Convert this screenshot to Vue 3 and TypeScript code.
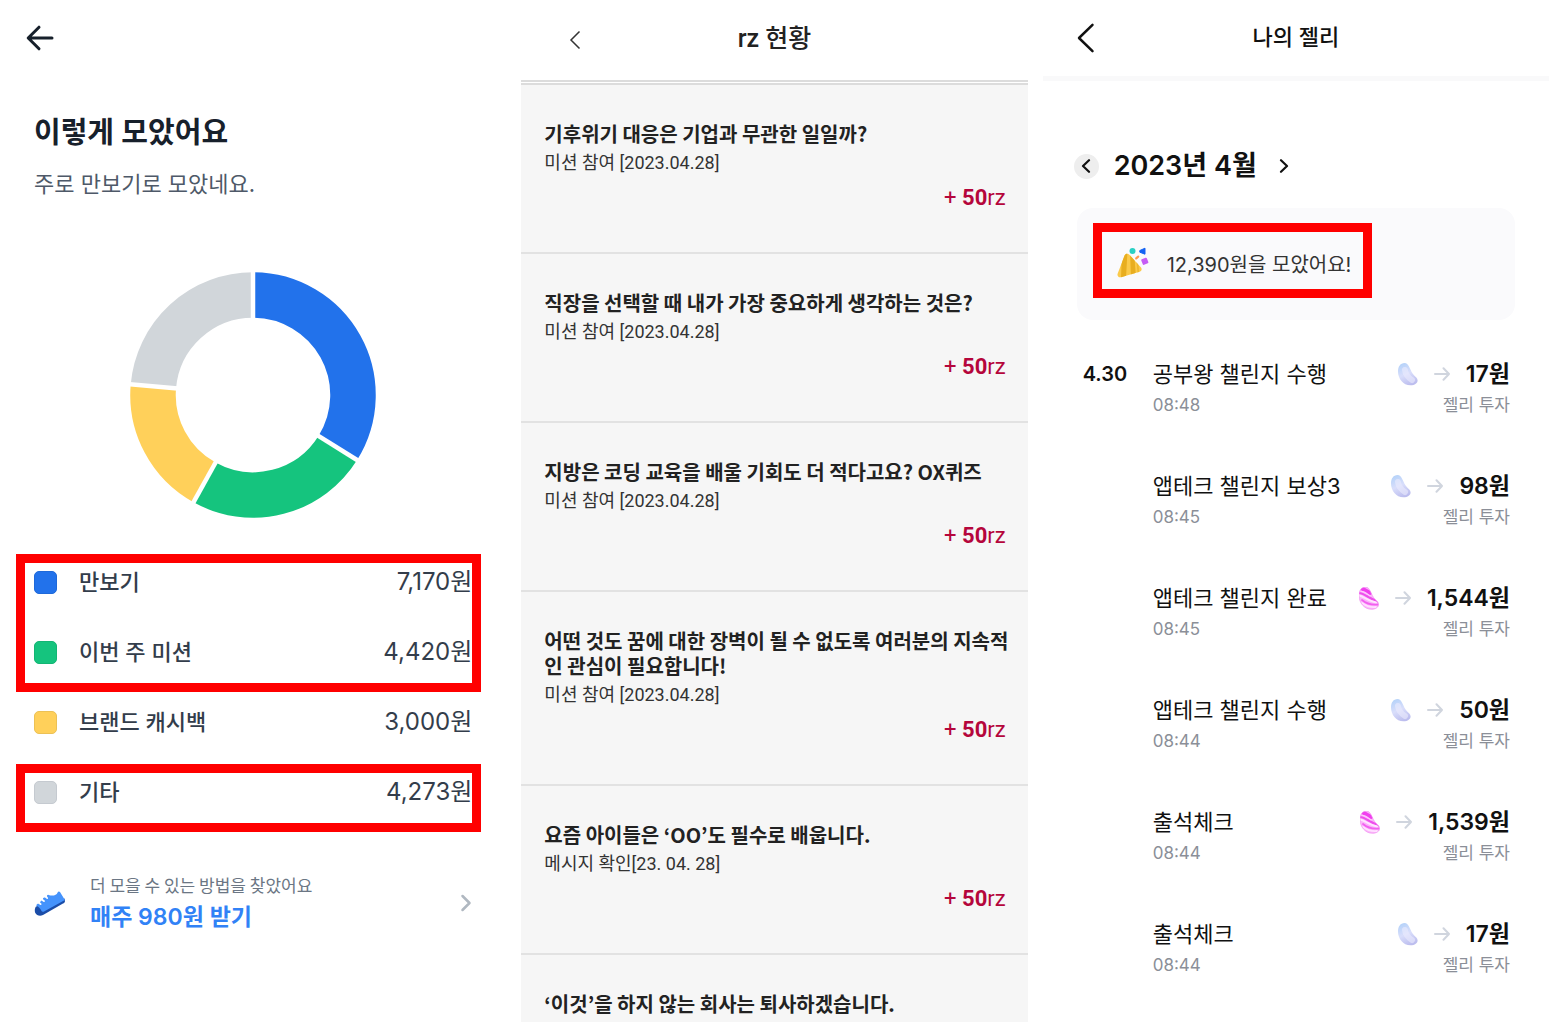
<script setup lang="ts">
interface Share {
  label: string
  amount: string
  color: string
  edge: string
}

interface ShareGroup {
  marked: boolean
  shares: Share[]
}

interface Slice {
  color: string
  from: number
  to: number
}

interface Mission {
  title: string
  note: string
  points?: number
}

interface JellyEntry {
  date: string
  name: string
  time: string
  kind: 'blue' | 'pink'
  amount: string
}

const shareGroups: ShareGroup[] = [
  {
    marked: true,
    shares: [
      { label: '만보기', amount: '7,170원', color: '#2272eb', edge: '#1f69d9' },
      { label: '이번 주 미션', amount: '4,420원', color: '#15c47e', edge: '#13b574' },
    ],
  },
  {
    marked: false,
    shares: [{ label: '브랜드 캐시백', amount: '3,000원', color: '#ffd05a', edge: '#ecc155' }],
  },
  {
    marked: true,
    shares: [{ label: '기타', amount: '4,273원', color: '#d1d6da', edge: '#c5cad0' }],
  },
]

const slices: Slice[] = [
  { color: '#2272eb', from: 0, to: 122 },
  { color: '#15c47e', from: 122, to: 209 },
  { color: '#ffd05a', from: 209, to: 275 },
  { color: '#d1d6da', from: 275, to: 360 },
]

const CENTER = 123
const RING = 100

function point(angle: number, radius: number): string {
  const rad = ((angle - 90) * Math.PI) / 180
  const x = CENTER + radius * Math.cos(rad)
  const y = CENTER + radius * Math.sin(rad)
  return `${x.toFixed(2)} ${y.toFixed(2)}`
}

function arc(slice: Slice): string {
  const large = slice.to - slice.from > 180 ? 1 : 0
  return `M${point(slice.from, RING)} A${RING} ${RING} 0 ${large} 1 ${point(slice.to, RING)}`
}

function divider(angle: number): string {
  return `M${point(angle, 70)} L${point(angle, 126)}`
}

const missions: Mission[] = [
  { title: '기후위기 대응은 기업과 무관한 일일까?', note: '미션 참여 [2023.04.28]', points: 50 },
  { title: '직장을 선택할 때 내가 가장 중요하게 생각하는 것은?', note: '미션 참여 [2023.04.28]', points: 50 },
  { title: '지방은 코딩 교육을 배울 기회도 더 적다고요? OX퀴즈', note: '미션 참여 [2023.04.28]', points: 50 },
  {
    title: '어떤 것도 꿈에 대한 장벽이 될 수 없도록 여러분의 지속적인 관심이 필요합니다!',
    note: '미션 참여 [2023.04.28]',
    points: 50,
  },
  { title: '요즘 아이들은 ‘OO’도 필수로 배웁니다.', note: '메시지 확인[23. 04. 28]', points: 50 },
  { title: '‘이것’을 하지 않는 회사는 퇴사하겠습니다.', note: '' },
]

const entries: JellyEntry[] = [
  { date: '4.30', name: '공부왕 챌린지 수행', time: '08:48', kind: 'blue', amount: '17원' },
  { date: '', name: '앱테크 챌린지 보상3', time: '08:45', kind: 'blue', amount: '98원' },
  { date: '', name: '앱테크 챌린지 완료', time: '08:45', kind: 'pink', amount: '1,544원' },
  { date: '', name: '앱테크 챌린지 수행', time: '08:44', kind: 'blue', amount: '50원' },
  { date: '', name: '출석체크', time: '08:44', kind: 'pink', amount: '1,539원' },
  { date: '', name: '출석체크', time: '08:44', kind: 'blue', amount: '17원' },
]

const jellyShape =
  'M6.500 0C2.500 0 0 3.500 0 8.500C0 15.500 5 22.300 12.500 22.300C16.800 22.300 19.800 20 19.600 17.200C19.400 14.900 17.600 13.800 16 12.200C13.800 10 13 7.600 11.600 4.800C10.300 2 8.800 0 6.500 0Z'
</script>

<template>
  <main class="page">
    <section class="panel summary">
      <header class="summary-bar">
        <button type="button" class="icon-button" aria-label="뒤로">
          <svg width="28" height="26" viewBox="0 0 28 26" fill="none" stroke="#17202b" stroke-width="3" stroke-linecap="round" stroke-linejoin="round">
            <path d="M13 2.2 2.2 13 13 23.8M2.6 13H26" />
          </svg>
        </button>
      </header>
      <h1 class="summary-title">이렇게 모았어요</h1>
      <p class="summary-sub">주로 만보기로 모았네요.</p>

      <svg class="donut" width="246" height="246" viewBox="0 0 246 246" fill="none" role="img" aria-label="모은 방법별 비율">
        <path v-for="slice in slices" :key="slice.from" :d="arc(slice)" :stroke="slice.color" stroke-width="45.5" />
        <path v-for="slice in slices" :key="'d' + slice.from" :d="divider(slice.from)" stroke="#fff" stroke-width="4.5" />
      </svg>

      <div class="legend">
        <div v-for="(group, index) in shareGroups" :key="index" class="legend-group">
          <ul>
            <li v-for="share in group.shares" :key="share.label">
              <span class="swatch" :style="{ background: share.color, borderColor: share.edge }"></span>
              <span class="share-label">{{ share.label }}</span>
              <span class="share-amount">{{ share.amount }}</span>
            </li>
          </ul>
          <span v-if="group.marked" class="marker" aria-hidden="true"></span>
        </div>
      </div>

      <a href="#" class="promo">
        <svg width="32" height="28" viewBox="0 0 32 28" aria-hidden="true">
          <path d="M2 17.5 30.6 9.5 31 12.2C30.8 13.4 30 14 29 14.600L9 26C6 27.400 2.600 26.600 1.200 23.800C.4 22 .8 19 2 17.500Z" fill="#1b4da8" />
          <path d="M2.200 16.400C2.600 15.400 3.600 14.700 4.800 14.900L6.400 15.900C7.600 16.300 8 14.900 7 14.200L5.900 13.300L7.400 11.500L9.800 12.900C11 13.200 11.300 11.900 10.400 11.200L9 10.200C8.700 9 10 8 11 8.600L13 9.900C14.200 10.200 14.400 9 13.600 8.300C12.400 7.200 13.100 5.500 14.600 5.900C18.500 7.200 22.500 6.500 23.600 3.400C24.100 2.300 25.300 2 26 3.100L30.900 11L10.500 22.300C8.900 23.200 7.800 22.900 7.200 21.500C6.400 19.300 4.600 17.600 2.200 16.400Z" fill="#4593fc" />
        </svg>
        <span class="promo-text">
          <span class="promo-note">더 모을 수 있는 방법을 찾았어요</span>
          <strong>매주 980원 받기</strong>
        </span>
        <svg width="12" height="18" viewBox="0 0 12 18" fill="none" stroke="#b0b8c1" stroke-width="2.500" stroke-linecap="round" stroke-linejoin="round" aria-hidden="true">
          <path d="M2.500 2 9.500 9 2.500 16" />
        </svg>
      </a>
    </section>

    <section class="panel missions">
      <header class="missions-bar">
        <button type="button" class="icon-button" aria-label="뒤로">
          <svg width="12" height="20" viewBox="0 0 12 20" fill="none" stroke="#333" stroke-width="1.500">
            <path d="M10.500 1.500 2 10 10.500 18.500" />
          </svg>
        </button>
        <h2>rz 현황</h2>
      </header>
      <ul class="mission-list">
        <li v-for="mission in missions" :key="mission.title">
          <h3>{{ mission.title }}</h3>
          <template v-if="mission.points">
            <p class="mission-note">{{ mission.note }}</p>
            <p class="mission-points">+ <b>{{ mission.points }}</b>rz</p>
          </template>
        </li>
      </ul>
    </section>

    <section class="panel jelly">
      <header class="jelly-bar">
        <button type="button" class="icon-button" aria-label="뒤로">
          <svg width="18" height="30" viewBox="0 0 18 30" fill="none" stroke="#111" stroke-width="2.500" stroke-linecap="round" stroke-linejoin="round">
            <path d="M15.500 1.800 2 15 15.500 28.200" />
          </svg>
        </button>
        <h2>나의 젤리</h2>
      </header>

      <div class="month">
        <button type="button" class="month-button previous" aria-label="이전 달">
          <svg width="10" height="14" viewBox="0 0 10 14" fill="none" stroke="#111" stroke-width="2.200" stroke-linecap="round" stroke-linejoin="round">
            <path d="M8 1.200 2 7 8 12.800" />
          </svg>
        </button>
        <h3>2023년 4월</h3>
        <button type="button" class="month-button" aria-label="다음 달">
          <svg width="10" height="14" viewBox="0 0 10 14" fill="none" stroke="#111" stroke-width="2.200" stroke-linecap="round" stroke-linejoin="round">
            <path d="M2 1.200 8 7 2 12.800" />
          </svg>
        </button>
      </div>

      <div class="total-card">
        <p class="total">
          <svg width="32" height="32" viewBox="0 0 32 32" aria-hidden="true">
            <defs>
              <clipPath id="cone">
                <path d="M7.600 8.600C8.400 6.600 10.800 6.200 12.400 7.800L24 20.600C25.200 22.200 24.600 24.200 22.700 24.800L4 30.200C1.600 30.800 0 29 .6 26.800Z" />
              </clipPath>
            </defs>
            <g clip-path="url(#cone)">
              <rect width="32" height="32" fill="#fbca4b" />
              <path d="M5 4H10.500L9 31H4ZM13 4 14 31H19L17 4Z" fill="#e8ae20" />
              <path d="M19 10 21 31H22.500L21 10Z" fill="#efb82f" />
            </g>
            <circle cx="15.500" cy="4" r="3" fill="#2ad0c4" />
            <path d="M22.800 3.500 28 1.200V7.200L22.800 5.200Z" fill="#1463f3" stroke="#1463f3" stroke-linejoin="round" />
            <path d="M19.200 11.400 21.200 9.600" stroke="#ff9a52" stroke-width="2.200" stroke-linecap="round" />
            <rect x="24.800" y="11.300" width="6" height="6" rx="1" fill="#c65cf5" transform="rotate(-22 27.800 14.300)" />
          </svg>
          <span>12,390원을 모았어요!</span>
        </p>
      </div>

      <ul class="entry-list">
        <li v-for="(entry, index) in entries" :key="index">
          <span class="entry-date">{{ entry.date }}</span>
          <span class="entry-main">
            <span class="entry-name">{{ entry.name }}</span>
            <span class="entry-small">{{ entry.time }}</span>
          </span>
          <span class="entry-side">
            <span class="entry-value">
              <svg v-if="entry.kind === 'blue'" width="20" height="23" viewBox="0 0 20 23" aria-hidden="true">
                <defs>
                  <linearGradient id="jelly-blue" x1=".2" y1="0" x2=".6" y2="1">
                    <stop offset="0" stop-color="#b4d2f9" />
                    <stop offset=".5" stop-color="#d9defb" />
                    <stop offset="1" stop-color="#bcbdee" />
                  </linearGradient>
                </defs>
                <path :d="jellyShape" fill="url(#jelly-blue)" />
                <path d="M7 7C7.500 11 10 14.500 14 17" fill="none" stroke="#ebebfe" stroke-width="6" stroke-linecap="round" opacity=".6" />
              </svg>
              <svg v-else width="20" height="23" viewBox="0 0 20 23" aria-hidden="true">
                <defs>
                  <clipPath id="jelly-clip"><path :d="jellyShape" /></clipPath>
                </defs>
                <g clip-path="url(#jelly-clip)" fill="none" stroke-linecap="round">
                  <rect width="20" height="23" fill="#fbb4fa" />
                  <path d="M2 1 11 6" stroke="#f03fee" stroke-width="4" />
                  <path d="M0 6C5 6 9 11 19 14.500" stroke="#ee4fec" stroke-width="2.200" />
                  <path d="M0 8.500C4 9 9 14 17 15.500" stroke="#ffe6ff" stroke-width="1.800" />
                  <path d="M3 13C6 15.500 11 18.500 19 17.500" stroke="#f25ff0" stroke-width="1.800" />
                  <path d="M3 16C7 19 12 20.500 17 20" stroke="#ffe0ff" stroke-width="1.800" />
                  <path d="M2 4.500C5 4 8 7 11 9" stroke="#ffc9fd" stroke-width="1.200" />
                </g>
                <path :d="jellyShape" fill="none" stroke="#f08af0" stroke-width=".6" />
              </svg>
              <svg width="16" height="14" viewBox="0 0 16 14" fill="none" stroke="#d0d5de" stroke-width="2" stroke-linecap="round" stroke-linejoin="round" aria-hidden="true">
                <path d="M1 7H15M9.500 1.200 15 7 9.500 12.800" />
              </svg>
              <b>{{ entry.amount }}</b>
            </span>
            <span class="entry-small">젤리 투자</span>
          </span>
        </li>
      </ul>
    </section>
  </main>
</template>

<style>
body {
  margin: 0;
  background: #fff;
}
</style>

<style scoped>
.page {
  display: grid;
  grid-template-columns: repeat(3, minmax(0, 1fr));
  column-gap: 15px;
  align-items: start;
  font-family: Inter, 'Noto Sans CJK KR', sans-serif;
}

h1,
h2,
h3,
p,
ul {
  margin: 0;
  padding: 0;
}

ul {
  list-style: none;
}

svg {
  display: block;
  flex: none;
}

button {
  display: flex;
  align-items: center;
  justify-content: center;
  padding: 0;
  border: 0;
  background: none;
}

/* savings summary */
.summary {
  padding: 0 34px;
}

.summary-bar {
  display: flex;
  align-items: center;
  height: 76px;
  margin-left: -8px;
}

.summary-title {
  margin-top: 37px;
  font-size: 29px;
  line-height: 40px;
  font-weight: 600;
  color: #17202b;
}

.summary-sub {
  margin-top: 16px;
  font-size: 22px;
  line-height: 30px;
  color: #4e5968;
}

.donut {
  margin: 73px auto 29px;
}

.legend-group {
  position: relative;
}

.legend li {
  display: flex;
  align-items: center;
  height: 70px;
  line-height: 32px;
  color: #333d4b;
}

.swatch {
  box-sizing: border-box;
  width: 23px;
  height: 23px;
  margin-right: 22px;
  border: 1px solid;
  border-radius: 5px;
}

.share-label {
  flex: 1;
  font-size: 22px;
  font-weight: 500;
}

.share-amount {
  font-size: 24px;
}

.marker {
  position: absolute;
  inset: 7px -9px -5px -18px;
  border: 9px solid #f00;
}

.promo {
  display: flex;
  align-items: center;
  margin-top: 46px;
  color: #6b7684;
  text-decoration: none;
}

.promo-text {
  flex: 1;
  display: flex;
  flex-direction: column;
  gap: 4px;
  margin-left: 24px;
}

.promo-note {
  font-family: 'Noto Sans CJK KR', sans-serif;
  font-size: 17px;
  line-height: 24px;
}

.promo strong {
  font-size: 23px;
  line-height: 32px;
  font-weight: 600;
  color: #3182f6;
}

/* mission history */
.missions {
  font-family: Roboto, 'Noto Sans CJK KR', sans-serif;
  color: #222;
}

.missions-bar,
.jelly-bar {
  display: grid;
  grid-template-columns: 1fr auto 1fr;
  align-items: center;
}

.missions-bar {
  height: 80px;
  padding: 0 48px;
  border-bottom: 5px double #dcdcdc;
}

.missions-bar h2 {
  padding-bottom: 2px;
  font-size: 25px;
  line-height: 36px;
  font-weight: 500;
}

.icon-button {
  justify-self: start;
}

.mission-list {
  background: #f6f6f6;
}

.mission-list li {
  padding: 36px 16px 41px 23px;
  border-bottom: 2px solid #e2e2e2;
}

.mission-list li:last-child {
  padding-bottom: 6px;
  border-bottom: 0;
}

.mission-list h3 {
  font-family: 'Noto Sans CJK KR', sans-serif;
  font-size: 20px;
  line-height: 25px;
  font-weight: 700;
}

.mission-note {
  margin-top: 4px;
  font-size: 18px;
  line-height: 25px;
  color: #333;
}

.mission-points {
  margin: 10px 6px 0 0;
  font-size: 22px;
  line-height: 26px;
  text-align: right;
  color: #b5063c;
}

/* jelly history */
.jelly {
  color: #111;
}

.jelly-bar {
  height: 76px;
  padding: 0 34px;
  border-bottom: 5px solid #f9f9fa;
}

.jelly-bar h2 {
  padding-bottom: 2px;
  font-size: 22px;
  line-height: 32px;
  font-weight: 500;
}

.month {
  display: flex;
  align-items: center;
  gap: 15px;
  margin: 65px 31px 0;
}

.month h3 {
  font-size: 27px;
  line-height: 40px;
  font-weight: 600;
}

.month-button {
  width: 25px;
  height: 25px;
  border-radius: 50%;
}

.previous {
  background: #eee;
}

.total-card {
  display: flex;
  margin: 22px 34px 0;
  padding: 15px 16px 22px;
  border-radius: 16px;
  background: #fafafc;
}

.total {
  display: flex;
  align-items: center;
  gap: 18px;
  height: 52px;
  padding: 5px 12px 0 15px;
  border: 9px solid #f00;
  font-size: 20px;
  color: #333;
}

.entry-list {
  margin: 38px 39px 0 40px;
}

.entry-list li {
  display: grid;
  grid-template-columns: 70px 1fr auto;
  height: 112px;
}

.entry-date {
  font-size: 20px;
  line-height: 32px;
  font-weight: 600;
}

.entry-main,
.entry-side {
  display: flex;
  flex-direction: column;
}

.entry-side {
  align-items: flex-end;
}

.entry-name {
  font-size: 22px;
  line-height: 32px;
}

.entry-value {
  display: flex;
  align-items: center;
  gap: 16px;
  font-size: 23px;
  line-height: 32px;
}

.entry-value b {
  font-weight: 600;
}

.entry-small {
  font-size: 17px;
  line-height: 30px;
  color: #8b8f98;
}
</style>
